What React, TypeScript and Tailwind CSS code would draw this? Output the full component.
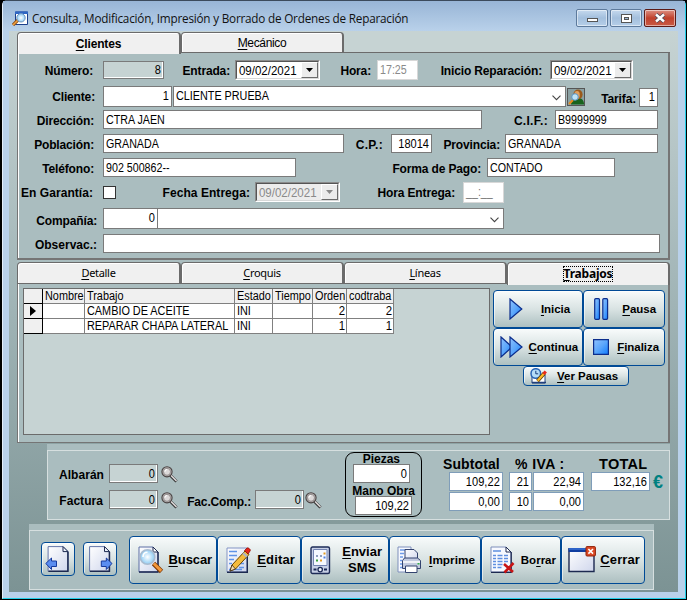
import type { ReactNode } from 'react';
import clsx from 'clsx';

type Props = { className?: string; children?: ReactNode };

/* ---------- text helpers ---------- */

function Label({ className, children }: Props) {
  return (
    <div className={clsx('shrink-0 text-right text-[12px] leading-[14px] font-bold tracking-[-0.15px] whitespace-nowrap', className)}>
      {children}
    </div>
  );
}

function Value({ className, children }: Props) {
  return (
    <span className={clsx('block text-[12px] leading-[14px] whitespace-pre', className)}>{children}</span>
  );
}

type FieldProps = Props & { right?: boolean; border?: string; pad?: string };

function Field({ className, children, right, border = 'border-[#7a7a7a]', pad = 'pt-[2px]' }: FieldProps) {
  return (
    <div className={clsx('shrink-0 border px-[2px]', border, pad, className)}>
      <Value className={right ? 'origin-right scale-x-[.92] text-right' : 'origin-left scale-x-[.89]'}>{children}</Value>
    </div>
  );
}

function DateCombo({ className, value, disabled }: { className?: string; value: string; disabled?: boolean }) {
  return (
    <div className={clsx('shrink-0 border border-t-[#8b8b8b] border-l-[#8b8b8b] border-r-white border-b-white', className)}>
      <div
        className={clsx(
          'flex h-full border border-t-[#555] border-l-[#555] border-r-[#d8d8d8] border-b-[#d8d8d8]',
          disabled ? 'bg-[#ececec] text-[#8a8a8a]' : 'bg-white'
        )}
      >
        <Value className="flex-1 origin-left scale-x-[.96] pt-[2px] pl-[2px]">{value}</Value>
        <div className="flex w-[17px] items-center justify-center border border-t-white border-l-white border-r-[#6b6b6b] border-b-[#6b6b6b] bg-[#ececec]">
          <svg width="7" height="4" viewBox="0 0 7 4">
            <path d="M0 0h7L3.5 4z" fill={disabled ? '#8a8a8a' : '#000'} />
          </svg>
        </div>
      </div>
    </div>
  );
}

function Chevron({ className }: Props) {
  return (
    <svg className={className} width="9" height="6" viewBox="0 0 9 6" fill="none" stroke="#444" strokeWidth="1.1">
      <path d="M.5.7l4 4 4-4" />
    </svg>
  );
}

/* ---------- tabs ---------- */

function Tab({ className, children }: Props) {
  return (
    <div
      className={clsx(
        'flex shrink-0 justify-center rounded-t-[4px] border-t border-r-2 border-l border-t-[#6b6b6b] border-r-[#6b6b6b] border-l-[#6b6b6b] bg-[#f0f0f0] shadow-[inset_1px_1px_0_#fff]',
        className
      )}
    >
      {children}
    </div>
  );
}

/* ---------- icons ---------- */

function IconDefs() {
  return (
    <svg width="0" height="0" className="absolute">
      <defs>
        <linearGradient id="blue" x1="0" y1="0" x2="1" y2="1">
          <stop offset="0" stopColor="#8fc2ff" />
          <stop offset=".5" stopColor="#5ba6fb" />
          <stop offset="1" stopColor="#0d7bff" />
        </linearGradient>
        <linearGradient id="page" x1="0" y1="0" x2="1" y2="1">
          <stop offset="0" stopColor="#fff" />
          <stop offset="1" stopColor="#cfd6ec" />
        </linearGradient>
        <radialGradient id="lens">
          <stop offset="0" stopColor="#fff" />
          <stop offset="1" stopColor="#8ccbf4" />
        </radialGradient>
      </defs>
    </svg>
  );
}

function WindowIcon() {
  return (
    <svg className="mt-[2px] ml-[2px]" width="16" height="15" viewBox="0 0 16 15">
      <path d="M3.500 1h12v12.500h-12z" fill="#fff" stroke="#1b3f8b" />
      <path d="M3 .5h13v2.500H3z" fill="#2f66c4" />
      <path d="M6 9L1 14" stroke="#8a4a10" strokeWidth="3.200" />
      <path d="M6 9L1 14" stroke="#f0a040" strokeWidth="1.600" />
      <circle cx="9" cy="6.800" r="4.200" fill="url(#lens)" stroke="#6f93bd" />
    </svg>
  );
}

function PersonIcon() {
  return (
    <svg width="16" height="16" viewBox="0 0 16 16">
      <path d="M3 15.500c0-4 3-6.500 7-6.500s6 2.500 6 6.500z" fill="#17631c" />
      <ellipse cx="10" cy="5.500" rx="4.600" ry="5" fill="#9a5a1b" />
      <ellipse cx="9" cy="6" rx="2.800" ry="4" fill="#e0a060" />
      <path d="M5 11l-4 4" stroke="#e88a1c" strokeWidth="2.200" />
      <circle cx="7" cy="8" r="3.300" fill="#bfe3f5" stroke="#5794c4" />
    </svg>
  );
}

function Magnifier() {
  return (
    <svg width="17" height="17" viewBox="0 0 17 17">
      <path d="M9 9l6.500 6.500" stroke="#333" strokeWidth="3" />
      <path d="M9.500 9l6 6" stroke="#e4dede" strokeWidth="1.400" />
      <circle cx="6" cy="5.800" r="5.100" fill="#b5b0b0" stroke="#4a4444" strokeWidth="1.100" />
      <circle cx="6" cy="5.800" r="3.500" fill="#dcd9d9" stroke="#857f7f" strokeWidth=".8" />
      <path d="M3.800 5.500c.3-1.300 1-1.800 2.200-2" stroke="#fff" strokeWidth="1.200" fill="none" />
    </svg>
  );
}

function PlayIcon() {
  return (
    <svg width="14" height="22" viewBox="0 0 14 22">
      <path d="M1 1l11.8 10L1 21z" fill="url(#blue)" stroke="#0b2d8c" strokeWidth="1.2" />
    </svg>
  );
}

function PauseIcon() {
  return (
    <svg width="15" height="22" viewBox="0 0 15 22">
      <rect x=".7" y=".7" width="4.8" height="20.6" rx="1" fill="url(#blue)" stroke="#0b2d8c" strokeWidth="1.2" />
      <rect x="8.8" y=".7" width="4.8" height="20.6" rx="1" fill="url(#blue)" stroke="#0b2d8c" strokeWidth="1.2" />
    </svg>
  );
}

function ForwardIcon() {
  return (
    <svg width="23" height="22" viewBox="0 0 23 22">
      <path d="M1 1l11 10L1 21z" fill="url(#blue)" stroke="#0b2d8c" strokeWidth="1.2" />
      <path d="M10 1l12 10-12 10z" fill="url(#blue)" stroke="#0b2d8c" strokeWidth="1.2" />
    </svg>
  );
}

function StopIcon() {
  return (
    <svg width="16" height="16" viewBox="0 0 16 16">
      <path d="M.6.6h14.8v14.8H.6z" fill="url(#blue)" stroke="#0b2d8c" strokeWidth="1.2" />
    </svg>
  );
}

function ClockPencilIcon() {
  return (
    <svg width="17" height="16" viewBox="0 0 17 16">
      <path d="M2 7h13v8H2z" fill="#fff" stroke="#23407c" />
      <path d="M2 14.5h14" stroke="#23407c" strokeWidth="1.5" />
      <circle cx="5.800" cy="5.500" r="4.800" fill="#b5dcf8" stroke="#2763b5" strokeWidth="1.5" />
      <path d="M5.800 2.800v3h2.400" stroke="#173e7c" fill="none" />
      <path d="M7.500 13l7-8" stroke="#5b3b00" strokeWidth="3.600" />
      <path d="M7.700 12.800l6.500-7.600" stroke="#fbb829" strokeWidth="2.200" />
      <path d="M13.500 6l2.300-2.600" stroke="#e8281c" strokeWidth="3" />
    </svg>
  );
}

function NavIcon({ dir }: { dir: 'prev' | 'next' }) {
  return (
    <svg width="28" height="28" viewBox="0 0 28 28">
      <g transform={dir === 'prev' ? 'translate(2.500 1)' : 'translate(2 1)'}>
        <path d="M.6.6h15l5 5v19.8H.6z" fill="url(#page)" stroke="#6575a8" />
        <path d="M1 25.2h19.4V6" fill="none" stroke="#1c2950" strokeWidth="1.5" />
        <path d="M15.500.6v5h5z" fill="#eef2fb" stroke="#1c2950" />
      </g>
      {dir === 'prev' ? (
        <path d="M.8 18.500L6.500 13v3h5v5.500h-5v3z" fill="#5b8df0" stroke="#173a9c" />
      ) : (
        <path d="M25 18.500L19.300 13v3h-5v5.500h5v3z" fill="#5b8df0" stroke="#173a9c" />
      )}
    </svg>
  );
}

function SearchPageIcon() {
  return (
    <svg width="26" height="28" viewBox="0 0 26 28">
      <path d="M1 1h14l5 5v20H1z" fill="url(#page)" stroke="#5d6fa5" />
      <path d="M1 26h19V6" fill="none" stroke="#1c2950" strokeWidth="1.4" />
      <path d="M15 1v5h5z" fill="#fff" stroke="#1c2950" />
      <path d="M15.500 17.500l8 8" stroke="#7a3500" strokeWidth="4.600" />
      <path d="M15.800 17.500l7.400 7.400" stroke="#f2963a" strokeWidth="3" />
      <circle cx="9.500" cy="11" r="7.300" fill="url(#lens)" stroke="#a9bcd0" strokeWidth="1.600" />
      <path d="M5 11c0-3 2-4.800 4.500-4.800" stroke="#fff" strokeWidth="1.600" fill="none" />
    </svg>
  );
}

function EditIcon() {
  return (
    <svg width="25" height="28" viewBox="0 0 25 28">
      <path d="M1 2h20v24H1z" fill="url(#page)" stroke="#8394c5" />
      <path d="M1 26.300h20.300V3" fill="none" stroke="#1c2950" strokeWidth="1.400" />
      <path d="M3 5.500h8M3 9.500h8M3 13.500h5M3 17.500h3M11 17.500h7M13 21.500h5M3 23.500h13" stroke="#5f93e8" strokeWidth="1.500" />
      <path d="M4 25l2-6L19 5l4 3.500L9.500 23z" fill="#f4bb3c" stroke="#6b4600" />
      <path d="M4 25l2-6 3.500 4z" fill="#f7dcb0" stroke="#3c2a10" strokeWidth=".8" />
      <path d="M17 7.200l4 3.500" stroke="#aeb6c4" strokeWidth="2.200" />
      <path d="M18.500 4.500L21 2c1-.8 4 1.500 3.200 2.800L22 8z" fill="#e5261b" stroke="#8f1009" strokeWidth=".8" />
    </svg>
  );
}

function PdaIcon() {
  return (
    <svg width="21" height="29" viewBox="0 0 21 29">
      <rect x="1" y="1" width="18.500" height="26.500" rx="1.500" fill="#c7d0e6" stroke="#1d2b57" strokeWidth="1.400" />
      <path d="M3.500 3.500h13.500v16H3.500z" fill="#f6f9ff" stroke="#7484b2" />
      <path d="M6 9h2v2H6zM10 9h2v2h-2z" fill="#8f9dbc" />
      <path d="M6 13.500h2v2H6z" fill="#39a339" />
      <path d="M10 13.500h2v2h-2z" fill="#e39a22" />
      <path d="M13.500 6.500h2v2h-2z" fill="#e39a22" />
      <path d="M13.500 10.500h2v2h-2z" fill="#4d7fe0" />
      <circle cx="10.200" cy="23.600" r="2.200" fill="#eef2fb" stroke="#1d2b57" strokeWidth="1.300" />
      <path d="M3.500 23.500h3M14 23.500h3" stroke="#1d2b57" strokeWidth="1.800" />
    </svg>
  );
}

function PrinterIcon() {
  return (
    <svg width="25" height="28" viewBox="0 0 25 28">
      <path d="M1 1h13v25H1z" fill="#f7f9ff" stroke="#7f8fbb" />
      <path d="M3 4h8M3 7.500h4M3 11h3M3 14.500h2M3 18h2M3 21.500h2" stroke="#6f9be8" strokeWidth="1.500" />
      <path d="M8 3.500h9l3.500 3.500v8H8z" fill="url(#page)" stroke="#33436f" />
      <path d="M5.500 14.500l2-2.500h13l3 2.500v8h-18z" fill="#c3cbe0" stroke="#33436f" />
      <path d="M6 16h17" stroke="#fff" strokeWidth="1.500" />
      <path d="M20.500 17h2v1.500h-2z" fill="#35b04a" />
      <path d="M8.500 20h11.500v6.500H8.500z" fill="#fff" stroke="#33436f" />
    </svg>
  );
}

function DeleteIcon() {
  return (
    <svg width="25" height="28" viewBox="0 0 25 28">
      <path d="M1 1h15l5 5v20H1z" fill="#f7f9ff" stroke="#7f8fbb" />
      <path d="M1 26.300h20.200V6" fill="none" stroke="#1c2950" strokeWidth="1.300" />
      <path d="M16 1v5h5z" fill="#fff" stroke="#1c2950" />
      <path d="M3 5h8M3 9.500h3M7.500 9.500h5M14 9.500h4M3 12.500h3M7.500 12.500h5M14 12.500h4M3 15.500h3M7.500 15.500h5M14 15.500h4M3 18.500h3M7.500 18.500h5M3 21.500h3M7.500 21.500h4" stroke="#5f8fe0" strokeWidth="1.400" />
      <path d="M14 18l9 8M23.500 17L14.500 26.500" stroke="#c81414" strokeWidth="2.600" />
    </svg>
  );
}

function CloseWindowIcon() {
  return (
    <svg width="28" height="28" viewBox="0 0 28 28">
      <path d="M1 3h25v22.500H1z" fill="url(#page)" stroke="#1c2950" strokeWidth="1.400" />
      <path d="M.5 2h26v4H.5z" fill="#0f3da0" />
      <path d="M1 3h17" stroke="#4d8bf0" />
      <rect x="18" y=".6" width="9.400" height="9.400" rx="1" fill="#dc4a26" stroke="#8f2108" />
      <path d="M20.400 3l4.600 4.600M25 3l-4.600 4.600" stroke="#fff" strokeWidth="1.500" />
    </svg>
  );
}

/* ---------- buttons ---------- */

function Btn({ className, children }: Props) {
  return (
    <div
      className={clsx(
        'flex shrink-0 items-center rounded-[4px] border border-[#004a96] bg-linear-to-b from-[#f8fbfb] via-[#d9e3e3] to-[#adc0c1] font-bold whitespace-nowrap shadow-[inset_1px_1px_0_#ffffff90]',
        className
      )}
    >
      {children}
    </div>
  );
}

function CaptionBtn({ className, children }: Props) {
  return (
    <div
      className={clsx(
        'flex h-[18px] w-[32px] items-center justify-center rounded-[2px] border shadow-[inset_0_0_0_1px_#ffffff80]',
        className
      )}
    >
      {children}
    </div>
  );
}

const U = ({ children }: Props) => <span className="underline decoration-1 underline-offset-2">{children}</span>;

/* ---------- sections ---------- */

function TitleBar() {
  return (
    <div className="flex h-[30px] shrink-0 bg-linear-to-b from-[#98b5d6] to-[#b9d1ea] pt-[8px] pl-[7px]">
      <WindowIcon />
      <div className="ml-[4px] w-[550px] origin-left scale-x-[.978] font-['Open_Sans','Noto_Sans',sans-serif] text-[12px] leading-[20px] tracking-[-0.22px] whitespace-nowrap text-[#111]">
        Consulta, Modificación, Impresión y Borrado de Ordenes de Reparación
      </div>
      <div className="ml-[-6px] flex gap-[2px]">
        <CaptionBtn className="border-[#5d7a9c] bg-linear-to-b from-[#c5d9ee] via-[#a3bfdd] to-[#b6cfe9]">
          <div className="mt-[3px] h-[4px] w-[11px] border border-[#555] bg-white" />
        </CaptionBtn>
        <CaptionBtn className="border-[#5d7a9c] bg-linear-to-b from-[#c5d9ee] via-[#a3bfdd] to-[#b6cfe9]">
          <div className="flex h-[9px] w-[11px] items-center justify-center border border-[#555] bg-white">
            <div className="h-[3px] w-[5px] border border-[#555] bg-[#9ab5d4]" />
          </div>
        </CaptionBtn>
        <CaptionBtn className="border-[#5c1a16] bg-linear-to-b from-[#dc8f82] via-[#c0402c] to-[#c95a45]">
          <svg width="12" height="10" viewBox="0 0 12 10">
            <path d="M2 1.500l8 7M10 1.500l-8 7" stroke="#4a4a5a" strokeWidth="4" />
            <path d="M2 1.500l8 7M10 1.500l-8 7" stroke="#fff" strokeWidth="2.400" />
          </svg>
        </CaptionBtn>
      </div>
    </div>
  );
}

function ClientForm() {
  return (
    <div className="h-[207px] border-r-2 border-b-2 border-l border-[#757575] bg-[#aabdbf]">
      <div className="h-full border-l border-white">
        <div className="flex h-[33px] items-start">
          <Label className="mt-[11px] w-[74px] tracking-[-0.3px]">Número:</Label>
          <Field right pad="pt-px" className="mt-[8px] ml-[10px] h-[18px] w-[61px] bg-[#c6d3d3] shadow-[inset_-1px_-1px_0_#fff]">8</Field>
          <Label className="mt-[11px] w-[66px]">Entrada:</Label>
          <DateCombo value="09/02/2021" className="mt-[7px] ml-[5px] h-[20px] w-[85px]" />
          <Label className="mt-[11px] w-[51px]">Hora:</Label>
          <Field border="border-[#d8d8d8]" pad="pt-[2px]" className="mt-[7px] ml-[6px] h-[20px] w-[41px] bg-white text-[#8a8a8a]">17:25</Field>
          <Label className="mt-[11px] w-[124px]">Inicio Reparación:</Label>
          <DateCombo value="09/02/2021" className="mt-[7px] ml-[8px] h-[20px] w-[83px]" />
        </div>
        <div className="flex h-[24px] items-start">
          <Label className="mt-[4px] w-[76px]">Cliente:</Label>
          <Field right className="ml-[8px] h-[21px] w-[69px] bg-white">1</Field>
          <div className="ml-px flex h-[21px] w-[393px] shrink-0 justify-between border border-[#7a7a7a] bg-white pt-[2px] pr-[4px] pl-[2px]">
            <Value className="origin-left scale-x-[.9]">CLIENTE PRUEBA</Value>
            <Chevron className="mt-[6px]" />
          </div>
          <div className="mt-[2px] ml-px flex h-[18px] w-[18px] items-center justify-center border border-[#555] bg-[#8aa0a2]">
            <PersonIcon />
          </div>
          <Label className="mt-[6px] w-[51px]">Tarifa:</Label>
          <Field right pad="pt-px" className="mt-[2px] ml-[3px] h-[19px] w-[19px] bg-white">1</Field>
        </div>
        <div className="flex h-[24px] items-start">
          <Label className="mt-[4px] w-[75px]">Dirección:</Label>
          <Field className="ml-[9px] h-[19px] w-[379px] bg-white">CTRA JAEN</Field>
          <Label className="mt-[4px] w-[66px] tracking-[0.3px]">C.I.F.:</Label>
          <Field className="ml-[7px] h-[19px] w-[103px] bg-white">B9999999</Field>
        </div>
        <div className="flex h-[24px] items-start">
          <Label className="mt-[4px] w-[75px]">Población:</Label>
          <Field className="ml-[9px] h-[19px] w-[241px] bg-white">GRANADA</Field>
          <Label className="mt-[4px] w-[39px] tracking-[0.3px]">C.P.:</Label>
          <Field right className="ml-[8px] h-[19px] w-[41px] bg-white">18014</Field>
          <Label className="mt-[4px] w-[68px]">Provincia:</Label>
          <Field className="ml-[5px] h-[19px] w-[153px] bg-white">GRANADA</Field>
        </div>
        <div className="flex h-[24px] items-start">
          <Label className="mt-[4px] w-[75px]">Teléfono:</Label>
          <Field className="ml-[9px] h-[19px] w-[193px] bg-white">902 500862--</Field>
          <Label className="mt-[4px] w-[185px]">Forma de Pago:</Label>
          <Field className="ml-[6px] h-[19px] w-[128px] bg-white">CONTADO</Field>
        </div>
        <div className="flex h-[26px] items-start">
          <Label className="mt-[4px] w-[74px] tracking-[0.05px]">En Garantía:</Label>
          <div className="mt-[4px] ml-[10px] h-[13px] w-[13px] border border-[#333] bg-white" />
          <Label className="mt-[4px] w-[134px] tracking-[0.05px]">Fecha Entrega:</Label>
          <DateCombo disabled value="09/02/2021" className="ml-[5px] h-[20px] w-[85px]" />
          <Label className="mt-[4px] w-[115px]">Hora Entrega:</Label>
          <Field border="border-[#d8d8d8]" className="ml-[8px] h-[21px] w-[41px] bg-white text-[#777]">__:__</Field>
        </div>
        <div className="flex h-[26px] items-start">
          <Label className="mt-[6px] w-[78px]">Compañía:</Label>
          <Field right className="ml-[6px] h-[21px] w-[55px] bg-white">0</Field>
          <div className="flex h-[21px] w-[346px] justify-end border border-l-0 border-[#7a7a7a] bg-white pr-[4px]">
            <Chevron className="mt-[8px]" />
          </div>
        </div>
        <div className="flex items-start">
          <Label className="mt-[4px] w-[78px] tracking-[0px]">Observac.:</Label>
          <Field className="ml-[6px] h-[19px] w-[557px] bg-white" />
        </div>
      </div>
    </div>
  );
}

const rows = [
  { trabajo: 'CAMBIO DE ACEITE', estado: 'INI', orden: 2, codtraba: 2 },
  { trabajo: 'REPARAR CHAPA LATERAL', estado: 'INI', orden: 1, codtraba: 1 },
];

function Cell({ className, children, right }: Props & { right?: boolean }) {
  return (
    <div className={clsx('h-[15px] border-r border-b border-[#808080] pr-px pl-[2px]', className)}>
      <Value className={right ? 'origin-right scale-x-[.95] text-right' : 'origin-left scale-x-[.905]'}>{children}</Value>
    </div>
  );
}

function JobsGrid() {
  return (
    <div className="ml-[5px] h-[147px] w-[467px] shrink-0 border border-[#6b6b6b] bg-[#c6d3d3]">
      <div className="grid w-[370px] grid-cols-[19px_42px_150px_38px_40px_34px_47px]">
        <Cell className="border-r-black border-b-black bg-[#f0f0f0]" />
        {['Nombre', 'Trabajo', 'Estado', 'Tiempo', 'Orden', 'codtraba'].map((h) => (
          <Cell key={h} className="bg-[#f0f0f0]">{h}</Cell>
        ))}
        {rows.map((r, i) => (
          <div key={r.trabajo} className="contents">
            <div className="flex items-center justify-center border-r border-b border-black bg-[#f0f0f0]">
              {i === 0 && (
                <svg width="6" height="10" viewBox="0 0 6 10">
                  <path d="M0 0l6 5-6 5z" />
                </svg>
              )}
            </div>
            <Cell className="bg-white" />
            <Cell className="bg-white">{r.trabajo}</Cell>
            <Cell className="bg-white">{r.estado}</Cell>
            <Cell className="bg-white" />
            <Cell right className="bg-white">{r.orden}</Cell>
            <Cell right className="bg-white">{r.codtraba}</Cell>
          </div>
        ))}
      </div>
    </div>
  );
}

function JobsPanel() {
  return (
    <div className="flex h-[159px] border-r-2 border-b border-l border-[#757575] bg-[#aabdbf] pt-[4px] shadow-[inset_1px_0_0_#fff]">
      <JobsGrid />
      <div className="ml-[3px] pt-[2px] text-[11.5px] leading-[14px] tracking-[-0.05px]">
        <div className="flex">
          <Btn className="h-[38px] w-[90px] justify-between pr-[12px] pl-[15px]">
            <PlayIcon />
            <span><U>I</U>nicia</span>
          </Btn>
          <Btn className="h-[38px] w-[82px] justify-between pr-[8px] pl-[10px]">
            <PauseIcon />
            <span><U>P</U>ausa</span>
          </Btn>
        </div>
        <div className="flex">
          <Btn className="h-[38px] w-[90px] justify-between pr-[4px] pl-[6px]">
            <ForwardIcon />
            <span><U>C</U>ontinua</span>
          </Btn>
          <Btn className="h-[38px] w-[82px] justify-between pr-[5px] pl-[9px]">
            <StopIcon />
            <span><U>F</U>inaliza</span>
          </Btn>
        </div>
        <Btn className="ml-[30px] h-[20px] w-[106px] justify-between pr-[10px] pl-[6px]">
          <ClockPencilIcon />
          <span><U>V</U>er Pausas</span>
        </Btn>
      </div>
    </div>
  );
}

function Totals() {
  const field = 'h-[19px] bg-white';
  const blue = 'border-[#7f9db9]';
  return (
    <div className="mt-px ml-[38px] h-[76px] w-[623px] bg-[#aabdbf] pt-[6px]">
      <div className="flex h-[70px] items-start border border-[#d6dfdf]">
        <div className="w-[129px] pt-[13px]">
          <div className="flex">
            <Label className="mt-[4px] w-[56px] tracking-[0.05px]">Albarán</Label>
            <Field right className="ml-[5px] h-[19px] w-[49px] bg-[#c6d3d3] shadow-[inset_-1px_-1px_0_#fff]">0</Field>
            <div className="mt-[2px] ml-[3px]"><Magnifier /></div>
          </div>
          <div className="mt-[7px] flex">
            <Label className="mt-[4px] w-[55px] tracking-[0.05px]">Factura</Label>
            <Field right className="ml-[6px] h-[19px] w-[49px] bg-[#c6d3d3] shadow-[inset_-1px_-1px_0_#fff]">0</Field>
            <div className="mt-[2px] ml-[3px]"><Magnifier /></div>
          </div>
        </div>
        <div className="mt-[39px] flex w-[168px]">
          <Label className="mt-[5px] w-[74px] tracking-[-0.1px]">Fac.Comp.:</Label>
          <Field right className="ml-[4px] h-[19px] w-[49px] bg-[#c6d3d3] shadow-[inset_-1px_-1px_0_#fff]">0</Field>
          <div className="mt-[2px] ml-px"><Magnifier /></div>
        </div>
        <div className="mt-px h-[65px] w-[77px] shrink-0 rounded-[9px] border border-black">
          <Label className="mt-[-1px] w-[54px] tracking-[0px]">Piezas</Label>
          <Field right className="mt-[-2px] ml-[7px] w-[57px] bg-white h-[19px]">0</Field>
          <Label className="mt-px w-[69px] tracking-[0px]">Mano Obra</Label>
          <Field right className="mt-[-2px] ml-[9px] w-[57px] bg-white h-[19px]">109,22</Field>
        </div>
        <div className="mt-[5px] ml-[21px] w-[62px] text-[14px] leading-[16px] tracking-[0.100px]">
          <div className="font-bold">Subtotal</div>
          <Field right border={blue} className={clsx(field, 'ml-[6px] w-[54px]')}>109,22</Field>
          <Field right border={blue} className={clsx(field, 'mt-px ml-[6px] w-[54px]')}>0,00</Field>
        </div>
        <div className="mt-[5px] ml-[4px] w-[77px] text-[14px] leading-[16px]">
          <div className="pl-[6px] font-bold tracking-[0.400px]">% IVA :</div>
          <div className="grid grid-cols-[23px_51px] gap-px">
            <Field right border={blue} className={field}>21</Field>
            <Field right border={blue} className={field}>22,94</Field>
            <Field right border={blue} className={field}>10</Field>
            <Field right border={blue} className={field}>0,00</Field>
          </div>
        </div>
        <div className="mt-[5px] ml-[5px] w-[60px] text-[14.500px] leading-[16px]">
          <div className="pl-[8px] font-bold tracking-[0.300px]">TOTAL</div>
          <Field right border={blue} className={clsx(field, 'w-[59px]')}>132,16</Field>
        </div>
        <div className="mt-[21px] ml-[2px] text-[18px] leading-[20px] font-bold text-[#008080]">€</div>
      </div>
    </div>
  );
}

function ActionBar() {
  const big = 'h-[48px] text-[13px] leading-[16px] justify-between';
  return (
    <div className="mt-[4px] ml-[20px] h-[66px] w-[625px] bg-[#aabdbf] pt-[6px]">
      <div className="flex h-[60px] items-start border border-[#d6dfdf] pt-[5px] pl-[11px]">
        <Btn className="mt-[6px] h-[34px] w-[34px] pl-[3px]"><NavIcon dir="prev" /></Btn>
        <Btn className="mt-[6px] ml-[8px] h-[34px] w-[34px] pl-[3px]"><NavIcon dir="next" /></Btn>
        <Btn className={clsx(big, 'ml-[12px] w-[88px] pr-[4px] pl-[8px] tracking-[-0.100px]')}>
          <SearchPageIcon />
          <span><U>B</U>uscar</span>
        </Btn>
        <Btn className={clsx(big, 'w-[84px] pr-[5px] pl-[8px] tracking-[0.150px]')}>
          <EditIcon />
          <span><U>E</U>ditar</span>
        </Btn>
        <Btn className={clsx(big, 'w-[88px] pr-[6px] pl-[8px]')}>
          <PdaIcon />
          <span className="text-center"><U>E</U>nviar<br />SMS</span>
        </Btn>
        <Btn className={clsx(big, 'w-[92px] pr-[5px] pl-[7px]')}>
          <PrinterIcon />
          <span className="text-[11.800px]"><U>I</U>mprime</span>
        </Btn>
        <Btn className={clsx(big, 'w-[80px] pr-[4px] pl-[8px]')}>
          <DeleteIcon />
          <span className="text-[11.500px]">Bo<U>r</U>rar</span>
        </Btn>
        <Btn className={clsx(big, 'w-[84px] pr-[4px] pl-[6px] tracking-[0.100px]')}>
          <CloseWindowIcon />
          <span><U>C</U>errar</span>
        </Btn>
      </div>
    </div>
  );
}

export default function App() {
  return (
    <div className="h-[600px] w-[687px] overflow-hidden bg-black pr-px pb-px pl-[2px] font-['Liberation_Sans',Arial,sans-serif] text-black">
      <IconDefs />
      <div className="flex h-full flex-col rounded-t-[5px] border-t border-r border-b border-l border-t-[#3b4a5c] border-r-[#22cfe8] border-b-[#22cfe8] border-l-[#e4eefa] bg-[#b9d1ea]">
        <TitleBar />
        <div className="mr-[7px] ml-[6px] h-[561px] overflow-hidden bg-linear-to-b from-[#c6d3d3] via-[#9fb3b5] to-[#7c9394] pl-[8px]">
          <div className="w-[653px] bg-[#c6d3d3]">
            <div className="flex h-[22px] items-start border-b border-[#6b6b6b] pt-px">
              <Tab className="h-[22px] w-[164px] pt-[4px]">
                <Label><U>C</U>lientes</Label>
              </Tab>
              <Tab className="h-[20px] w-[163px] pt-[3px]">
                <span className="text-[12px] leading-[14px] tracking-[-0.35px]"><U>M</U>ecánico</span>
              </Tab>
            </div>
            <ClientForm />
          </div>
          <div className="w-[653px] bg-[#aabdbf] pt-[2px] font-['Noto_Sans','Open_Sans',sans-serif]">
            <div className="flex h-[22px] items-start border-b border-[#6b6b6b] text-[11px] leading-[14px] tracking-[-0.3px]">
              <Tab className="h-[21px] w-[164px] pt-[3px]"><span><U>D</U>etalle</span></Tab>
              <Tab className="h-[21px] w-[163px] pt-[3px]"><span><U>C</U>roquis</span></Tab>
              <Tab className="h-[21px] w-[163px] pt-[3px]"><span><U>L</U>íneas</span></Tab>
              <Tab className="h-[23px] w-[163px] pt-[4px]">
                <span className="h-[14px] outline-1 outline-dotted outline-black text-[12px] font-bold leading-[14px] tracking-[-0.200px]"><U>T</U>rabajos</span>
              </Tab>
            </div>
          </div>
          <div className="w-[653px]"><JobsPanel /></div>
          <div className="-ml-[8px]">
            <Totals />
            <ActionBar />
          </div>
        </div>
      </div>
    </div>
  );
}
